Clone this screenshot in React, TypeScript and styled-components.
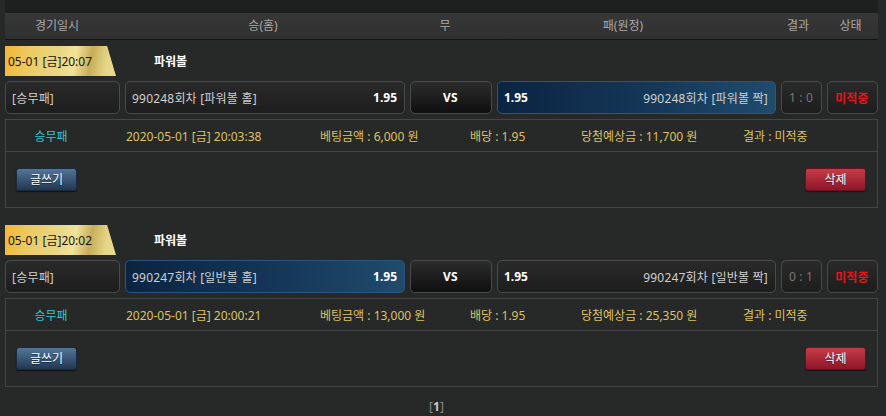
import React from "react";
import styled, { createGlobalStyle } from "styled-components";

const Global = createGlobalStyle`
  html, body { margin: 0; padding: 0; background: #272828; }
  body { font-family: "Noto Sans", "Noto Sans CJK KR", sans-serif; font-size: 12px; color: #ccc; }
  * { box-sizing: border-box; }
`;

const Page = styled.div`
  width: 873px;
  margin-left: 5px;
`;

const TopStrip = styled.div`
  height: 13px;
  background: #1e1f1f;
`;

const Header = styled.div`
  display: grid;
  grid-template-columns: 104px 308px 56px 300px 50px 1fr;
  height: 27px;
  align-items: center;
  background: linear-gradient(#373737, #303030);
  border-bottom: 1px solid #141414;
`;

const HeadCell = styled.div`
  text-align: center;
  color: #a8a8a8;
  font-size: 12px;
  line-height: 26px;
`;

const Block = styled.div`
  margin-top: ${(p: { $first?: boolean }) => (p.$first ? "6px" : "17px")};
`;

const TagRow = styled.div`
  display: flex;
  align-items: center;
  height: 30px;
`;

const Tag = styled.div`
  width: 111px;
  height: 30px;
  padding-left: 3px;
  display: flex;
  align-items: center;
  color: #151515;
  font-size: 12px;
  clip-path: polygon(0 0, 92% 0, 100% 100%, 0 100%);
  background: linear-gradient(100deg, #f4b535 0%, #ebcb62 22%, #e9d684 48%, #f1e398 62%, #c8ad58 76%, #e6d688 90%, #eadb8c 100%);
`;

const Title = styled.div`
  margin-left: 38px;
  color: #fff;
  font-weight: bold;
  font-size: 12px;
`;

const BetRow = styled.div`
  display: flex;
  gap: 5px;
  margin-top: 5px;
  height: 33px;
`;

const Box = styled.div<{ $w?: number; $sel?: boolean; $align?: string }>`
  ${(p) => (p.$w ? `width: ${p.$w}px; flex: none;` : "flex: 1;")}
  display: flex;
  align-items: center;
  justify-content: ${(p) => p.$align || "space-between"};
  padding: 0 7px 0 6px;
  border-radius: 5px;
  border: 1px solid ${(p) => (p.$sel ? "#2a5680" : "#4a4a4a")};
  background: ${(p) =>
    p.$sel
      ? "linear-gradient(90deg, #0b2442 0%, #143556 50%, #1f4b6d 100%)"
      : "linear-gradient(#2a2a2a, #1d1d1d)"};
  color: #cfcfcf;
  font-size: 12px;
  letter-spacing: 0.2px;
`;

const VsBox = styled(Box)`
  background: linear-gradient(#2c2c2c, #0f0f0f);
  color: #fff;
  font-weight: bold;
`;

const Odds = styled.span`
  color: #fff;
  font-weight: bold;
  letter-spacing: 0;
`;

const Score = styled.span`
  color: #777;
`;

const Status = styled.span`
  color: #e4161b;
  font-weight: bold;
`;

const Panel = styled.div`
  margin-top: 5px;
  border: 1px solid #454545;
`;

const InfoRow = styled.div`
  display: grid;
  grid-template-columns: 120px 194px 150px 111px 162px 1fr;
  height: 32px;
  align-items: center;
  border-bottom: 1px solid #454545;
  font-size: 12px;
`;

const Info = styled.div<{ $c?: string }>`
  color: ${(p) => p.$c || "#ddc264"};
  white-space: nowrap;
`;

const Kind = styled(Info)`
  text-align: center;
  padding-right: 30px;
`;

const ActionRow = styled.div`
  display: flex;
  justify-content: space-between;
  align-items: center;
  height: 55px;
  padding: 0 11px 1px 10px;
`;

const Btn = styled.button<{ $red?: boolean }>`
  width: 61px;
  height: 23px;
  border-radius: 3px;
  border: 1px solid ${(p) => (p.$red ? "#6d1020" : "#1b2b3e")};
  background: ${(p) =>
    p.$red
      ? "linear-gradient(#c63c48, #8f1628)"
      : "linear-gradient(#527699, #223852)"};
  box-shadow: 0 1px 1px rgba(0, 0, 0, 0.6);
  color: #fff;
  font-family: inherit;
  font-size: 12px;
  text-shadow: 0 1px 1px rgba(0, 0, 0, 0.5);
  padding: 0;
`;

const Pager = styled.div`
  margin-top: 11px;
  text-align: center;
  font-size: 12px;
  color: #8a8a8a;
  padding-right: 10px;
  b { color: #ccc; font-weight: bold; }
`;

type Game = {
  time: string;
  round: string;
  kind: string;
  homeSel: boolean;
  score: string;
  at: string;
  amount: string;
  win: string;
};

const games: Game[] = [
  { time: "05-01 [금]20:07", round: "990248회차", kind: "파워볼", homeSel: false, score: "1 : 0", at: "2020-05-01 [금] 20:03:38", amount: "6,000", win: "11,700" },
  { time: "05-01 [금]20:02", round: "990247회차", kind: "일반볼", homeSel: true, score: "0 : 1", at: "2020-05-01 [금] 20:00:21", amount: "13,000", win: "25,350" },
];

export default function App() {
  return (
    <>
      <Global />
      <Page>
        <TopStrip />
        <Header>
          <HeadCell>경기일시</HeadCell>
          <HeadCell>승(홈)</HeadCell>
          <HeadCell>무</HeadCell>
          <HeadCell>패(원정)</HeadCell>
          <HeadCell>결과</HeadCell>
          <HeadCell>상태</HeadCell>
        </Header>
        {games.map((g, i) => (
          <Block key={i} $first={i === 0}>
            <TagRow>
              <Tag>{g.time}</Tag>
              <Title>파워볼</Title>
            </TagRow>
            <BetRow>
              <Box $w={115} $align="flex-start">[승무패]</Box>
              <Box $w={280} $sel={g.homeSel}>
                <span>{g.round} [{g.kind} 홀]</span>
                <Odds>1.95</Odds>
              </Box>
              <VsBox $w={82} $align="center">VS</VsBox>
              <Box $w={279} $sel={!g.homeSel}>
                <Odds>1.95</Odds>
                <span>{g.round} [{g.kind} 짝]</span>
              </Box>
              <Box $w={41} $align="center"><Score>{g.score}</Score></Box>
              <Box $align="center"><Status>미적중</Status></Box>
            </BetRow>
            <Panel>
              <InfoRow>
                <Kind $c="#2fc7d0">승무패</Kind>
                <Info>{g.at}</Info>
                <Info>베팅금액 : {g.amount} 원</Info>
                <Info>배당 : 1.95</Info>
                <Info>당첨예상금 : {g.win} 원</Info>
                <Info>결과 : 미적중</Info>
              </InfoRow>
              <ActionRow>
                <Btn>글쓰기</Btn>
                <Btn $red>삭제</Btn>
              </ActionRow>
            </Panel>
          </Block>
        ))}
        <Pager>[<b>1</b>]</Pager>
      </Page>
    </>
  );
}
